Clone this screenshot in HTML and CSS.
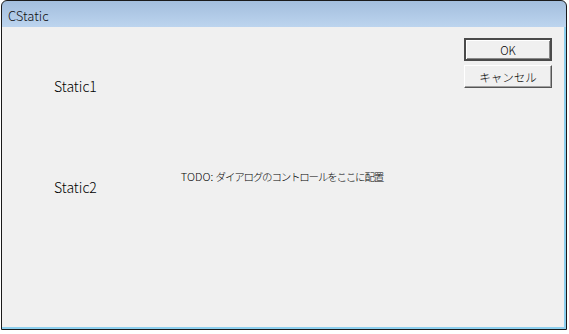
FILE: index.html
```html
<!DOCTYPE html>
<html lang="ja">
<head>
    <meta charset="UTF-8">
    <title>CStatic</title>
    <link rel="stylesheet" href="styles.css">
</head>
<body>
    <div class="window">
        <div class="titlebar">CStatic</div>
        <div class="client">
            <div class="labels">
                <p class="static first">Static1</p>
                <div class="mid">
                    <p class="static">Static2</p>
                    <p class="todo">TODO: <span class="jp">ダイアログのコントロールをここに配置</span></p>
                </div>
            </div>
            <div class="buttons">
                <button class="btn default">OK</button>
                <button class="btn">キャンセル</button>
            </div>
        </div>
    </div>
</body>
</html>
```

FILE: styles.css
```css
* {
    box-sizing: border-box;
}

body {
    margin: 0;
    padding: 0 0 0 1px;
    background: #fff;
    font-family: "Noto Sans CJK JP", "DejaVu Sans", sans-serif;
}

.window {
    width: 566px;
    height: 330px;
    border: 1px solid #1a1a1a;
    border-radius: 6px 6px 0 0;
    background: linear-gradient(#a3bedd, #bdd5ef 27px);
    display: flex;
    flex-direction: column;
}

.titlebar {
    height: 26px;
    padding: 7px 0 0 6px;
    font-size: 13px;
    line-height: 16px;
    font-weight: 300;
    color: #111;
}

.client {
    flex: 1;
    background: #f0f0f0;
    border-right: 2px solid #8ccfee;
    border-bottom: 2px solid #8ccfee;
    display: flex;
    justify-content: space-between;
}

.labels {
    padding: 51px 0 0 52px;
    flex: 1;
}

.static {
    margin: 0;
    font-size: 14px;
    line-height: 16px;
    font-weight: 300;
    color: #000;
}

.mid {
    margin-top: 75px;
    display: flex;
    align-items: flex-start;
}

.mid .static {
    margin-top: 10px;
}

.todo {
    margin: 0 0 0 84px;
    font-size: 11px;
    line-height: 14px;
    font-weight: 300;
    color: #000;
}

.jp {
    font-size: 10.5px;
    letter-spacing: -1.2px;
}

.buttons {
    display: flex;
    flex-direction: column;
    gap: 4px;
    padding: 11px 12px 0 0;
}

.btn {
    width: 88px;
    height: 23px;
    margin: 0;
    padding: 0;
    font-family: "Noto Sans CJK JP", sans-serif;
    font-size: 11.5px;
    font-weight: 300;
    color: #000;
    background: #f0f0f0;
    border: 1px solid #fff;
    border-right-color: #555;
    border-bottom-color: #555;
    box-shadow: inset -1px -1px 0 #a0a0a0;
}

.btn.default {
    border: 2px solid #4a4a4a;
    box-shadow: inset 1px 1px 0 #fff, inset -1px -1px 0 #888;
}
```
